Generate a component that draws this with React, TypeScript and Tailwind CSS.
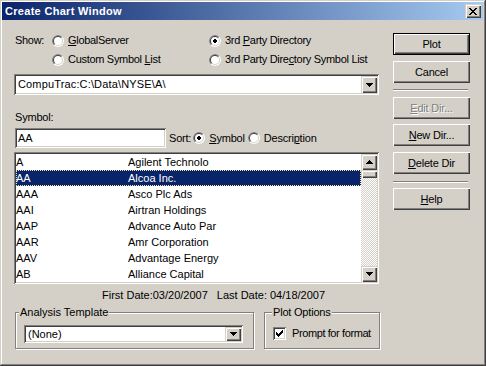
import React from "react";

const RAISED =
  "shadow-[inset_1px_1px_0_#fff,inset_-1px_-1px_0_#404040,inset_-2px_-2px_0_#808080]";
const RAISED2 =
  "shadow-[inset_1px_1px_0_#d4d0c8,inset_2px_2px_0_#fff,inset_-1px_-1px_0_#404040,inset_-2px_-2px_0_#808080]";
const SUNKEN =
  "shadow-[inset_1px_1px_0_#808080,inset_-1px_-1px_0_#fff,inset_2px_2px_0_#404040,inset_-2px_-2px_0_#d4d0c8]";

function Radio({ checked }: { checked?: boolean }) {
  return (
    <svg width="12" height="12" viewBox="0 0 12 12" className="shrink-0">
      <circle cx="6" cy="6" r="6" fill="#fff" />
      <path d="M1.757 10.243 A6 6 0 0 1 10.243 1.757 Z" fill="#808080" />
      <circle cx="6" cy="6" r="5" fill="#d4d0c8" />
      <path d="M2.464 9.536 A5 5 0 0 1 9.536 2.464 Z" fill="#404040" />
      <circle cx="6" cy="6" r="4" fill="#fff" />
      {checked && (
        <g fill="#000" shapeRendering="crispEdges">
          <rect x="4" y="5" width="4" height="2" />
          <rect x="5" y="4" width="2" height="4" />
        </g>
      )}
    </svg>
  );
}

function DownTri() {
  return (
    <svg width="7" height="4" viewBox="0 0 7 4" shapeRendering="crispEdges">
      <rect x="0" y="0" width="7" height="1" />
      <rect x="1" y="1" width="5" height="1" />
      <rect x="2" y="2" width="3" height="1" />
      <rect x="3" y="3" width="1" height="1" />
    </svg>
  );
}

function UpTri() {
  return (
    <svg width="7" height="4" viewBox="0 0 7 4" shapeRendering="crispEdges">
      <rect x="3" y="0" width="1" height="1" />
      <rect x="2" y="1" width="3" height="1" />
      <rect x="1" y="2" width="5" height="1" />
      <rect x="0" y="3" width="7" height="1" />
    </svg>
  );
}

function CloseX() {
  const rows: [number, number][][] = [
    [[0, 2], [6, 2]],
    [[1, 2], [5, 2]],
    [[2, 4]],
    [[3, 2]],
    [[2, 4]],
    [[1, 2], [5, 2]],
    [[0, 2], [6, 2]],
  ];
  return (
    <svg width="8" height="7" viewBox="0 0 8 7" shapeRendering="crispEdges">
      {rows.map((r, y) =>
        r.map(([x, w], i) => <rect key={`${y}-${i}`} x={x} y={y} width={w} height={1} />)
      )}
    </svg>
  );
}

function Check() {
  const rows: [number, number][][] = [
    [[6, 1]],
    [[5, 2]],
    [[0, 1], [4, 3]],
    [[0, 2], [3, 3]],
    [[0, 5]],
    [[1, 3]],
    [[2, 1]],
  ];
  return (
    <svg width="7" height="7" viewBox="0 0 7 7" shapeRendering="crispEdges">
      {rows.map((r, y) =>
        r.map(([x, w], i) => <rect key={`${y}-${i}`} x={x} y={y} width={w} height={1} />)
      )}
    </svg>
  );
}

function U({ children }: { children: React.ReactNode }) {
  return <span className="underline underline-offset-[1px]">{children}</span>;
}

function Btn({
  children,
  def,
  disabled,
  className = "",
}: {
  children: React.ReactNode;
  def?: boolean;
  disabled?: boolean;
  className?: string;
}) {
  return (
    <div
      className={
        "h-[22px] w-[77px] flex items-center justify-center bg-[#d4d0c8] tracking-[-0.2px] " +
        (def
          ? "border border-black shadow-[inset_1px_1px_0_#fff,inset_-1px_-1px_0_#404040,inset_-2px_-2px_0_#808080] "
          : RAISED + " ") +
        (disabled ? "text-[#808080] [text-shadow:1px_1px_0_#fff] " : "") +
        className
      }
    >
      {children}
    </div>
  );
}

function Sep({ className = "" }: { className?: string }) {
  return (
    <div className={"w-[75px] h-[2px] flex flex-col " + className}>
      <div className="h-[1px] bg-[#808080]" />
      <div className="h-[1px] bg-white" />
    </div>
  );
}

const rows = [
  ["A", "Agilent Technolo"],
  ["AA", "Alcoa Inc."],
  ["AAA", "Asco Plc Ads"],
  ["AAI", "Airtran Holdings"],
  ["AAP", "Advance Auto Par"],
  ["AAR", "Amr Corporation"],
  ["AAV", "Advantage Energy"],
  ["AB", "Alliance Capital"],
];

export default function App() {
  return (
    <div className="w-[486px] h-[366px] bg-[#d4d0c8] pt-[2px] pl-[2px] pr-[3px] flex flex-col text-[11px] leading-[13px] text-black font-['Liberation_Sans',Arial,sans-serif] shadow-[inset_-1px_-1px_0_#404040,inset_1px_1px_0_#d4d0c8,inset_-2px_-2px_0_#808080,inset_2px_2px_0_#fff]">
      {/* Title bar */}
      <div className="h-[18px] flex items-center justify-between bg-[linear-gradient(to_right,#0a246a,#a6caf0)] pl-[3px] pr-[2px]">
        <span className="text-white font-bold tracking-[0.3px]">Create Chart Window</span>
        <div className={"w-[16px] h-[14px] bg-[#d4d0c8] flex items-center justify-center " + RAISED2}>
          <CloseX />
        </div>
      </div>

      {/* Body */}
      <div className="flex pl-[12px]">
        {/* Left column */}
        <div className="w-[367px] pt-[11px] flex flex-col">
          <div className="grid grid-cols-[38px_157px_auto] grid-rows-[19px_19px] items-center tracking-[-0.3px]">
            <span className="pl-[1px]">Show:</span>
            <div className="flex items-center gap-[4px]">
              <Radio />
              <span>
                <U>G</U>lobalServer
              </span>
            </div>
            <div className="flex items-center gap-[4px]">
              <Radio checked />
              <span>
                3rd <U>P</U>arty Directory
              </span>
            </div>
            <span />
            <div className="flex items-center gap-[4px]">
              <Radio />
              <span>
                Custom Symbol <U>L</U>ist
              </span>
            </div>
            <div className="flex items-center gap-[4px]">
              <Radio />
              <span>
                3rd Party Dire<U>c</U>tory Symbol List
              </span>
            </div>
          </div>

          {/* Directory combo */}
          <div className={"mt-[5px] w-[365px] h-[21px] bg-white flex items-center p-[2px] " + SUNKEN}>
            <span className="flex-1 pl-[2px] tracking-[0.15px]">CompuTrac:C:\Data\NYSE\A\</span>
            <div className={"w-[16px] h-[17px] bg-[#d4d0c8] flex items-center justify-center " + RAISED2}>
              <DownTri />
            </div>
          </div>

          <span className="mt-[16px] pl-[1px] tracking-[-0.2px]">Symbol:</span>

          <div className="mt-[4px] flex items-center h-[20px] tracking-[-0.2px]">
            <div className={"ml-[1px] w-[151px] h-[20px] bg-white flex items-center pl-[3px] " + SUNKEN}>AA</div>
            <span className="ml-[3px]">Sort:</span>
            <div className="ml-[2px] flex items-center gap-[4px]">
              <Radio checked />
              <span>
                <U>S</U>ymbol
              </span>
            </div>
            <div className="ml-[3px] flex items-center gap-[4px]">
              <Radio />
              <span>
                Descri<U>p</U>tion
              </span>
            </div>
          </div>

          {/* Listbox */}
          <div className={"mt-[4px] w-[365px] h-[132px] bg-white p-[2px] flex " + SUNKEN}>
            <div className="flex-1 flex flex-col">
              {rows.map(([s, d], i) => (
                <div
                  key={s}
                  className={
                    "h-[16px] flex items-center " +
                    (i === 1
                      ? "bg-[#0a246a] text-white border border-dotted border-[#f3e7a4]"
                      : "border border-transparent")
                  }
                >
                  <span className="w-[112px] -ml-[1px]">{s}</span>
                  <span>{d}</span>
                </div>
              ))}
            </div>
            <div className="w-[16px] flex flex-col bg-[repeating-conic-gradient(#fff_0_25%,#d4d0c8_0_50%)] bg-[length:2px_2px]">
              <div className={"h-[16px] bg-[#d4d0c8] flex items-center justify-center " + RAISED2}>
                <UpTri />
              </div>
              <div className={"h-[8px] bg-[#d4d0c8] " + RAISED2} />
              <div className="flex-1" />
              <div className={"h-[16px] bg-[#d4d0c8] flex items-center justify-center " + RAISED2}>
                <DownTri />
              </div>
            </div>
          </div>

          <div className="mt-[5px] pl-[88px] flex">
            <span>First Date:03/20/2007</span>
            <span className="ml-[9px]">Last Date: 04/18/2007</span>
          </div>

          {/* Group boxes */}
          <div className="mt-[10px] flex">
            <div className="ml-[1px] w-[239px] h-[37px] border border-[#808080] shadow-[inset_1px_1px_0_#fff,1px_1px_0_#fff] flex flex-col">
              <span className="-mt-[7px] ml-[3px] px-[1px] w-fit bg-[#d4d0c8]">Analysis Template</span>
              <div className={"mt-[6px] ml-[8px] w-[219px] h-[18px] bg-white flex items-center p-[2px] " + SUNKEN}>
                <span className="flex-1 pl-[2px]">(None)</span>
                <div className={"w-[16px] h-[14px] bg-[#d4d0c8] flex items-center justify-center " + RAISED2}>
                  <DownTri />
                </div>
              </div>
            </div>
            <div className="ml-[10px] w-[116px] h-[37px] border border-[#808080] shadow-[inset_1px_1px_0_#fff,1px_1px_0_#fff] flex flex-col">
              <span className="-mt-[7px] ml-[7px] px-[1px] w-fit bg-[#d4d0c8] tracking-[-0.2px]">Plot Options</span>
              <div className="mt-[8px] ml-[8px] flex items-center gap-[6px]">
                <div className={"w-[13px] h-[13px] bg-white flex items-center justify-center " + SUNKEN}>
                  <Check />
                </div>
                <span className="tracking-[-0.4px]">Prompt for format</span>
              </div>
            </div>
          </div>
        </div>

        {/* Right column */}
        <div className="ml-[12px] pt-[13px] flex flex-col">
          <Btn def>Plot</Btn>
          <Btn className="mt-[6px]">Cancel</Btn>
          <Sep className="mt-[6px]" />
          <Btn disabled className="mt-[6px]">
            <span>
              <U>E</U>dit Dir...
            </span>
          </Btn>
          <Btn className="mt-[5px]">
            <span>
              <U>N</U>ew Dir...
            </span>
          </Btn>
          <Btn className="mt-[6px]">
            <span>
              <U>D</U>elete Dir
            </span>
          </Btn>
          <Sep className="mt-[7px]" />
          <Btn className="mt-[5px]">
            <span>
              <U>H</U>elp
            </span>
          </Btn>
        </div>
      </div>
    </div>
  );
}
